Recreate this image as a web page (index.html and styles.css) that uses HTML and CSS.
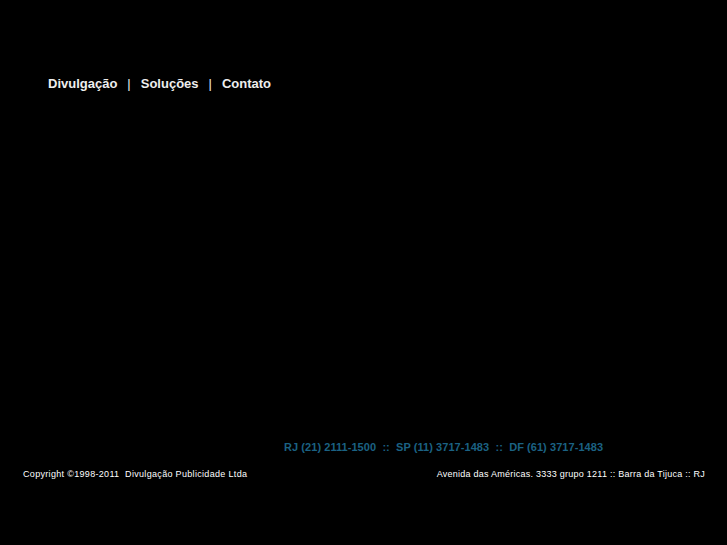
FILE: index.html
```html
<!DOCTYPE html>
<html>
<head>
<meta charset="utf-8">
<link rel="stylesheet" href="styles.css">
</head>
<body>
<div class="page">
  <nav class="nav">
    <a class="nav-link">Divulgação</a>
    <span class="sep">|</span>
    <a class="nav-link">Soluções</a>
    <span class="sep">|</span>
    <a class="nav-link">Contato</a>
  </nav>
  <div class="spacer"></div>
  <div class="phones">RJ (21) 2111-1500&nbsp; ::&nbsp; SP (11) 3717-1483&nbsp; ::&nbsp; DF (61) 3717-1483</div>
  <footer class="footer">
    <span class="copy">Copyright ©1998-2011&nbsp; Divulgação Publicidade Ltda</span>
    <span class="address">Avenida das Américas. 3333 grupo 1211 :: Barra da Tijuca :: RJ</span>
  </footer>
</div>
</body>
</html>
```
FILE: styles.css
```css
html, body {
  margin: 0;
  padding: 0;
  background: #000;
  height: 100%;
}
.page {
  width: 727px;
  height: 545px;
  display: flex;
  flex-direction: column;
  font-family: "Liberation Sans", Arial, sans-serif;
}
.nav {
  padding: 76px 0 0 48px;
  display: flex;
  gap: 10px;
  font-size: 13px;
  font-weight: bold;
  color: #eeeeee;
  line-height: 16px;
}
.nav-link { color: #eeeeee; }
.sep { font-weight: normal; }
.spacer { flex: 1; }
.phones {
  padding-left: 284px;
  font-size: 11px;
  font-weight: bold;
  color: #1b6283;
  line-height: 14px;
  letter-spacing: 0.06px;
}
.footer {
  display: flex;
  justify-content: space-between;
  padding: 14px 22px 65px 23px;
  font-size: 9px;
  color: #ffffff;
  line-height: 12px;
}
.copy { letter-spacing: 0.32px; }
.address { letter-spacing: 0.25px; }
```
